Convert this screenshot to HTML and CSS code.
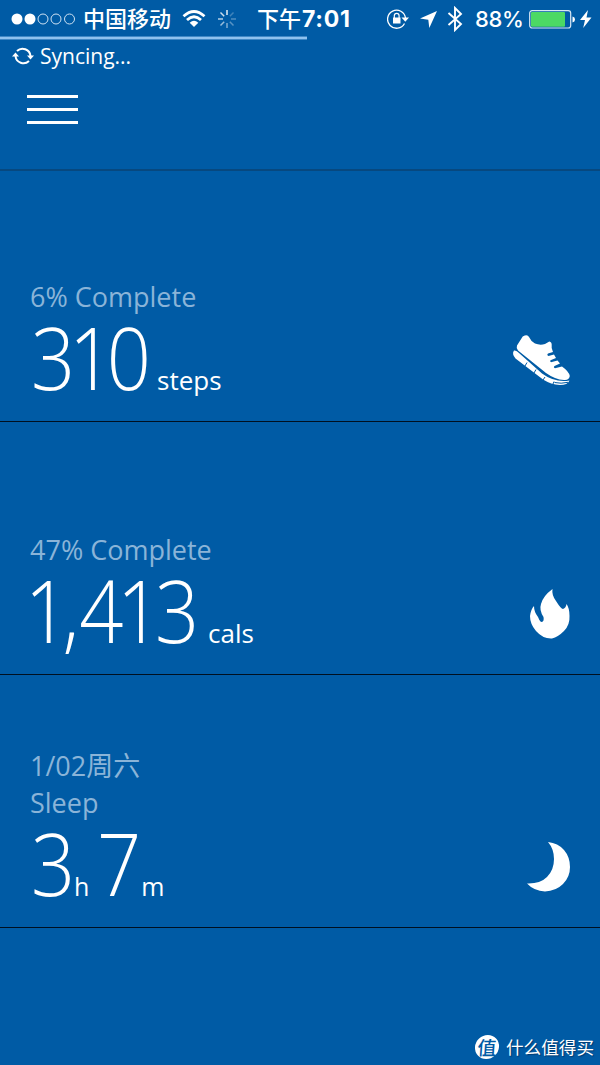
FILE: index.html
```html
<!DOCTYPE html>
<html lang="zh-Hans">
<head>
    <meta charset="UTF-8">
    <meta name="viewport" content="width=device-width, initial-scale=1.0">
    <title>Band</title>
    <link rel="stylesheet" href="styles.css">
</head>
<body>

    <div class="status-bar">
        <svg class="dots" width="65" height="12" viewBox="0 0 65 12">
            <circle cx="6" cy="6" r="5.5" fill="#fff"/>
            <circle cx="19" cy="6" r="5.5" fill="#fff"/>
            <g fill="none" stroke="#cfe2f3" stroke-width="1">
                <circle cx="32" cy="6" r="5"/>
                <circle cx="45" cy="6" r="5"/>
                <circle cx="58.500" cy="6" r="5"/>
            </g>
        </svg>
        <span class="carrier">中国移动</span>
        <svg class="wifi" width="24" height="18" viewBox="0 0 24 18">
            <path d="M1.500 6.200Q12-3.200 22.500 6.200M5 10Q12 3.600 19 10" fill="none" stroke="#fff" stroke-width="2.800"/>
            <path d="M7.700 12.700Q12 9 16.300 12.700L12 17Z" fill="#fff"/>
        </svg>
        <svg class="spinner" width="20" height="20" viewBox="-10 -10 20 20" stroke="#fff" stroke-width="1.500">
            <path d="M0-4V-9" opacity=".9"/>
            <path d="M2.800-2.800L6.500-6.500" opacity=".25"/>
            <path d="M4 0H9" opacity=".3"/>
            <path d="M2.800 2.800L6.500 6.500" opacity=".35"/>
            <path d="M0 4V9" opacity=".5"/>
            <path d="M-2.800 2.800L-6.500 6.500" opacity=".6"/>
            <path d="M-4 0H-9" opacity=".7"/>
            <path d="M-2.800-2.800L-6.500-6.500" opacity=".8"/>
        </svg>
        <span class="time">下午<b>7:01</b></span>
        <svg class="lock" width="22" height="20" viewBox="0 0 22 20">
            <path d="M17.500 14.500A9 9 0 1 1 18.500 9" fill="none" stroke="#fff" stroke-width="1.300"/>
            <path d="M14.500 8.500H22L18.300 12.700Z" fill="#fff"/>
            <rect x="6" y="8.500" width="7.500" height="6" fill="#fff"/>
            <path d="M7.300 9V6.700a2.400 2.400 0 0 1 4.800 0V9" fill="none" stroke="#fff" stroke-width="1.200"/>
        </svg>
        <svg class="arrow" width="17" height="17" viewBox="0 0 17 17">
            <path d="M17 0L9.300 17L8.300 8.800L0 7.600Z" fill="#fff"/>
        </svg>
        <svg class="bluetooth" width="16" height="26" viewBox="0 0 16 26">
            <path d="M1.500 7L14 18L8 24V2L14 8L1.500 19" fill="none" stroke="#fff" stroke-width="1.900"/>
        </svg>
        <span class="percent">88%</span>
        <svg class="battery" width="47" height="19" viewBox="0 0 47 19">
            <rect x=".7" y=".7" width="41" height="17.300" rx="2.500" fill="none" stroke="#d9e8f5" stroke-width="1.200"/>
            <rect x="2" y="2" width="34" height="14.700" rx="1" fill="#4cd964"/>
            <path d="M43.500 6.500Q46 7 46 9.400T43.500 12.500Z" fill="#fff"/>
        </svg>
        <svg class="bolt" width="12" height="18" viewBox="0 0 12 18">
            <path d="M8 0L0 10H5L3.200 18L11.500 7.500H6.500Z" fill="#fff"/>
        </svg>
    </div>

    <div class="progress"><div class="progress-fill"></div></div>

    <div class="header">
        <div class="sync">
            <svg width="22" height="18" viewBox="0 0 22 18">
                <path d="M5 4A8 8 0 0 1 18.500 9M17 14A8 8 0 0 1 3.500 9" fill="none" stroke="#fff" stroke-width="2"/>
                <path d="M15 8.500H22L18.500 12.500ZM0 9.500H7L3.500 5.500Z" fill="#fff"/>
            </svg>
            <span>Syncing...</span>
        </div>
        <div class="menu"><i></i><i></i><i></i></div>
    </div>

    <div class="tile">
        <div class="info">
            <div class="label">6% Complete</div>
            <div class="value"><span class="num steps">310</span><span class="unit">steps</span></div>
        </div>
        <svg class="icon" width="60" height="52" viewBox="0 0 60 52">
            <path d="M12.700 2.500Q17.500 0 19 3Q21 7.500 25 9.500Q30 11.500 35 10L39.300 7.500Q42 8 41.700 11.700Q41 14 43 18L38 19.500Q36.500 21 38.500 22L44 20.500L46 24L40.500 26.300Q39.500 27.500 41 28.300L47.500 26.500L50 29.500L44.500 32Q43 33.500 45 34.300L52 32.500Q59 37.500 59.800 42Q59 46.500 54 46Q45 45.500 36 39L8 16.500Q6 14 7 11.500Z" fill="#fff"/>
            <path d="M4 16.500Q6.500 16 9 19L32 39.500Q45 49 59.500 46.500Q57.500 51 50 51Q41 50.500 33 45.500L5.500 24.500Q1.500 20 4 16.500Z" fill="#fff"/>
            <path d="M15 32L17 28.500M24 39L26 35.500M33 46L35 43M43 50L44 47.500M44.500 48.500Q51 50 58 48.300" fill="none" stroke="#005ba5" stroke-width="1"/>
        </svg>
    </div>

    <div class="tile">
        <div class="info">
            <div class="label">47% Complete</div>
            <div class="value"><span class="num cals"><span class="thousands">1,</span>413</span><span class="unit">cals</span></div>
        </div>
        <svg class="icon" width="40" height="50" viewBox="0 0 40 50">
            <path d="M22.500 0Q21.500 6 26 12Q31 20 33 20Q36 19 36.500 15Q39.500 19 39.500 27Q40 36 34 42Q28 48 22 49.500Q13 50 6 42Q0 35 0 27Q1 20 4 17Q4 23 8 28Q9 31 11 33Q14.500 33 13.500 28Q9 21 11 15Q13 7 22.500 0Z" fill="#fff"/>
        </svg>
    </div>

    <div class="tile">
        <div class="info">
            <div class="label">1/02周六<br>Sleep</div>
            <div class="value"><span class="num hours">3</span><span class="unit">h</span><span class="num minutes">7</span><span class="unit">m</span></div>
        </div>
        <svg class="icon" width="43" height="50" viewBox="0 0 43 50">
            <path d="M21 0Q31 1 37 8Q43 15 43 25Q43 35 36 42Q29 49 18 49.500Q7 49 0 41.500Q13 42 20 35Q27 28 27 17Q27 7 21 0Z" fill="#fff"/>
        </svg>
    </div>

    <div class="watermark"><span class="badge">值</span><span>什么值得买</span></div>

</body>
</html>
```
FILE: styles.css
```css
* {
    box-sizing: border-box;
}
body {
    margin: 0;
    height: 1065px;
    overflow: hidden;
    position: relative;
    background-color: #005ba5;
    color: #fff;
    font-family: "Open Sans", "Noto Sans CJK SC", sans-serif;
}
svg {
    display: block;
    flex: none;
}
.status-bar {
    display: flex;
    align-items: center;
    height: 36px;
    padding: 2px 0 0 11px;
    font-family: Inter, "Noto Sans CJK SC", sans-serif;
    font-size: 22px;
    line-height: 34px;
    white-space: nowrap;
}
.carrier {
    width: 90px;
    margin-left: 7px;
    font-weight: 500;
}
.wifi {
    margin-left: 9px;
}
.spinner {
    margin-left: 11px;
}
.time {
    width: 97px;
    margin-left: 20px;
    font-weight: 500;
}
.time b {
    margin-left: 1px;
    font-size: 23px;
    font-weight: 700;
    letter-spacing: 0.7px;
}
.lock {
    margin-left: 33px;
}
.arrow {
    margin-left: 11px;
}
.bluetooth {
    margin-left: 10px;
}
.percent {
    width: 48px;
    margin-left: 12px;
    font-weight: 500;
    letter-spacing: -0.3px;
}
.battery {
    margin-left: 6px;
}
.bolt {
    margin-left: 4px;
}
.progress {
    height: 4px;
}
.progress-fill {
    width: 307px;
    height: 4px;
    background-color: #8fc2ef;
    border-top: 1px solid #3f88c6;
    border-bottom: 1px solid #3f88c6;
}
.header {
    height: 131px;
    border-bottom: 2px solid #07487f;
}
.sync {
    display: flex;
    align-items: center;
    height: 32px;
    padding-left: 12px;
    font-size: 21px;
}
.sync span {
    margin-left: 6px;
}
.menu {
    width: 51px;
    margin: 23px 0 0 27px;
}
.menu i {
    display: block;
    height: 3px;
    margin-bottom: 10px;
    background-color: #fff;
}
.tile {
    display: flex;
    justify-content: space-between;
    align-items: flex-end;
    height: 253px;
    padding: 0 30px;
    border-bottom: 1px solid #001020;
}
.tile:nth-of-type(4) {
    height: 251px;
}
.label {
    color: #8ab4d8;
    font-size: 27px;
    line-height: 37px;
}
.value {
    display: flex;
    align-items: baseline;
    height: 97px;
    margin-top: 9px;
    line-height: 66px;
}
.num {
    font-size: 86px;
    font-weight: 300;
    letter-spacing: -7px;
    white-space: nowrap;
    transform: translateX(1px) scaleX(0.9);
    transform-origin: left;
}
.steps {
    width: 127px;
}
.cals {
    width: 178px;
}
.thousands {
    margin: 0 7px 0 -7px;
}
.hours {
    width: 44px;
}
.minutes {
    width: 45px;
    margin-left: 7px;
}
.unit {
    font-size: 26px;
}
.hours ~ .unit {
    font-size: 25px;
}
.icon {
    margin-bottom: 35px;
}
.watermark {
    display: flex;
    align-items: center;
    position: absolute;
    right: 6px;
    bottom: 5px;
    font-family: "Noto Sans CJK SC", sans-serif;
    font-size: 17.6px;
    line-height: 26px;
    text-shadow: 1px 1px 1px #003a70;
}
.badge {
    width: 24px;
    height: 24px;
    margin-right: 7px;
    border-radius: 50%;
    background-color: #fff;
    color: #005ba5;
    font-size: 19px;
    font-weight: 500;
    line-height: 23px;
    text-align: center;
    text-shadow: none;
    transform: skewX(-4deg);
}
```
